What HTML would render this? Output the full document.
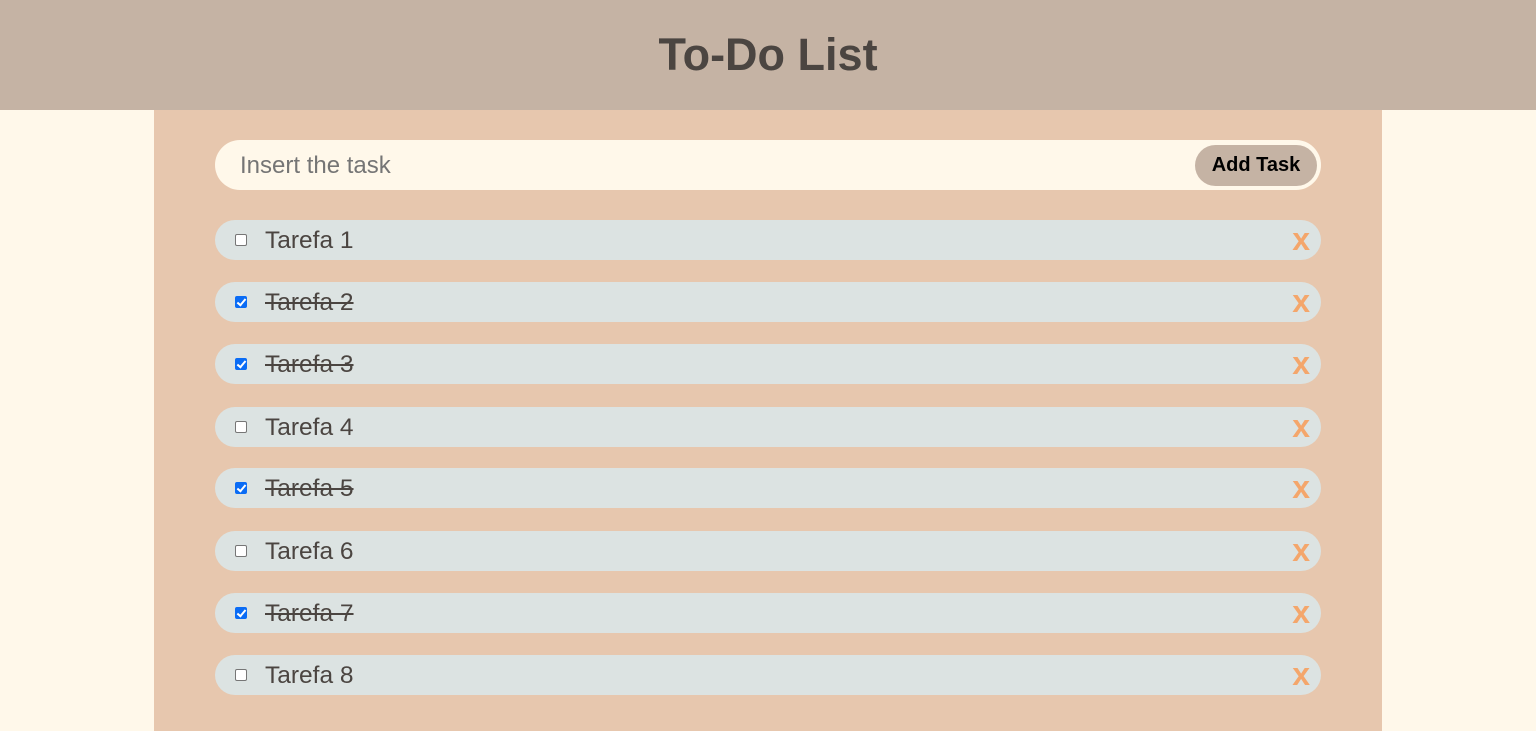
<!DOCTYPE html>
<html><head><style>
*{margin:0;padding:0;box-sizing:border-box}
body{width:1536px;height:731px;background:#fff8ea;font-family:"Liberation Sans",sans-serif;overflow:hidden}
header{height:110px;background:#c5b3a4;text-align:center}
h1{font-size:45px;line-height:110px;color:#4b4541;font-weight:bold}
.main{position:absolute;left:154px;top:110px;width:1228px;height:621px;background:#e7c7ae}
.inp{position:absolute;left:61px;top:30px;width:1106px;height:50px;background:#fff8ea;border-radius:25px}
.inp span{position:absolute;left:25px;top:12px;font-size:24px;color:#757575}
.btn{position:absolute;right:4px;top:5px;width:122px;height:41px;background:#c5b3a4;border-radius:21px;font-size:20px;font-weight:bold;text-align:center;line-height:41px;color:#000}
.row{position:absolute;left:61px;width:1106px;height:40px;background:#dce3e2;border-radius:20px}
.cb{position:absolute;left:20px;top:14px;width:12px;height:12px;border:1px solid #767676;border-radius:2px;background:#fff}
.cb.on{background:#0a6cf5;border-color:#0a6cf5}
.cb.on:after{content:"";position:absolute;left:3px;top:0px;width:3px;height:7px;border:solid #fff;border-width:0 2px 2px 0;transform:rotate(40deg)}
.t{position:absolute;left:50px;top:7px;font-size:24.5px;color:#4b4541}
.done .t{text-decoration:line-through}
.x{position:absolute;right:11px;top:4px;font-size:32px;font-weight:bold;color:#f4a66b;line-height:30px}
</style></head><body>
<header><h1>To-Do List</h1></header>
<div class="main">
<div class="inp"><span>Insert the task</span><div class="btn">Add Task</div></div>
<div class="row" style="top:110px"><div class="cb"></div><div class="t">Tarefa 1</div><div class="x">x</div></div>
<div class="row done" style="top:172px"><div class="cb on"></div><div class="t">Tarefa 2</div><div class="x">x</div></div>
<div class="row done" style="top:234px"><div class="cb on"></div><div class="t">Tarefa 3</div><div class="x">x</div></div>
<div class="row" style="top:297px"><div class="cb"></div><div class="t">Tarefa 4</div><div class="x">x</div></div>
<div class="row done" style="top:358px"><div class="cb on"></div><div class="t">Tarefa 5</div><div class="x">x</div></div>
<div class="row" style="top:421px"><div class="cb"></div><div class="t">Tarefa 6</div><div class="x">x</div></div>
<div class="row done" style="top:483px"><div class="cb on"></div><div class="t">Tarefa 7</div><div class="x">x</div></div>
<div class="row" style="top:545px"><div class="cb"></div><div class="t">Tarefa 8</div><div class="x">x</div></div>
</div>
</body></html>
